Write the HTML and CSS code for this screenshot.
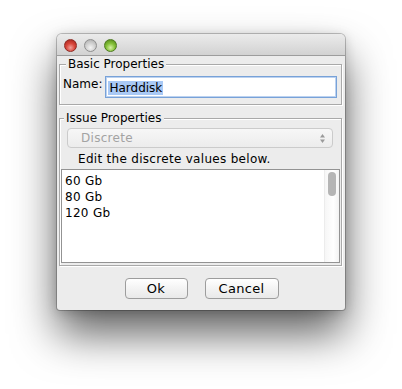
FILE: index.html
```html
<!DOCTYPE html>
<html lang="en">

<head>
  <meta charset="UTF-8">
  <title>Issue Properties</title>
  <link rel="stylesheet" href="styles.css">
</head>

<body>
  <div class="window">
    <div class="titlebar">
      <span class="light red"></span>
      <span class="light gray"></span>
      <span class="light green"></span>
    </div>

    <div class="content">
      <fieldset class="group basic">
        <legend>Basic Properties</legend>
        <div class="name-row">
          <label class="name-label">Name:</label>
          <div class="textfield"><span class="selected">Harddisk</span></div>
        </div>
      </fieldset>

      <fieldset class="group issue">
        <legend>Issue Properties</legend>
        <div class="combo">
          <span class="combo-text">Discrete</span>
          <svg class="combo-arrows" width="7" height="11" viewBox="0 0 7 11">
            <path d="M3.5 1 L6 4.5 L1 4.5 Z" fill="#9a9a9a" />
            <path d="M3.5 10 L6 6.5 L1 6.5 Z" fill="#9a9a9a" />
          </svg>
        </div>
        <div class="hint">Edit the discrete values below.</div>
        <div class="list">
          <ul class="values">
            <li>60 Gb</li>
            <li>80 Gb</li>
            <li>120 Gb</li>
          </ul>
          <div class="scrollbar">
            <div class="thumb"></div>
          </div>
        </div>
      </fieldset>

      <div class="buttons">
        <button class="btn ok">Ok</button>
        <button class="btn cancel">Cancel</button>
      </div>
    </div>
  </div>
</body>

</html>
```

FILE: styles.css
```css
html {
  height: 100%;
}

body {
  margin: 0;
  min-height: 100%;
  padding-top: 34px;
  box-sizing: border-box;
  background: #fff;
  font-family: "DejaVu Sans", "Noto Sans", sans-serif;
  font-size: 12px;
  color: #000;
}

.window {
  margin-left: 57px;
  width: 288px;
  height: 276px;
  background: #ececec;
  border-radius: 5px 5px 3px 3px;
  /* mac style window shadow, heavier below */
  box-shadow: 0 0 0 1px rgba(0, 0, 0, 0.22), 0 24px 44px rgba(0, 0, 0, 0.62), 0 2px 12px rgba(0, 0, 0, 0.18);
  display: flex;
  flex-direction: column;
  overflow: hidden;
}

/* title bar */
.titlebar {
  height: 22px;
  border-bottom: 1px solid #9d9d9d;
  background: linear-gradient(#ebebeb, #d2d2d2);
  display: flex;
  align-items: center;
  gap: 7px;
  padding: 1px 0 0 7px;
  box-sizing: border-box;
}

.light {
  width: 13px;
  height: 13px;
  border-radius: 50%;
  box-sizing: border-box;
}

.light.red {
  background: radial-gradient(circle at 50% 70%, #f0a09a 0, #d9473c 45%, #9e1d16 100%);
  border: 1px solid #8e2a24;
}

.light.gray {
  background: radial-gradient(circle at 50% 70%, #f4f4f4 0, #cfcfcf 50%, #a9a9a9 100%);
  border: 1px solid #8f8f8f;
}

.light.green {
  background: radial-gradient(circle at 50% 70%, #d7f0a6 0, #86c23a 45%, #4c7f14 100%);
  border: 1px solid #4d7a1f;
}

.content {
  padding: 1px 3px 0 2px;
  display: flex;
  flex-direction: column;
}

/* etched group boxes */
.group {
  margin: 0;
  border: 1px solid #a9a9a9;
  box-shadow: inset 1px 1px 0 #fff, 1px 1px 0 #fff;
  min-width: 0;
}

.group legend {
  padding: 0 2px;
  margin-left: 3px;
  background: #ececec;
  line-height: 14px;
}

.basic {
  padding: 0 4px 6px 3px;
}

.name-row {
  display: flex;
  align-items: flex-start;
  gap: 3px;
}

.name-label {
  line-height: 14px;
  margin-top: 6px;
}

.textfield {
  flex: 1;
  height: 22px;
  margin-top: 5px;
  box-sizing: border-box;
  border: 1px solid #78a2d8;
  box-shadow: inset 0 0 0 1px #bcd2f0;
  background: #fff;
  padding: 4px 0 0 2px;
  line-height: 14px;
}

.selected {
  background: #a9c9f5;
  padding: 0 1px;
}

.issue {
  margin-top: 6px;
  padding: 0 1px 2px 1px;
}

.combo {
  margin: 3px 7px 0 6px;
  height: 20px;
  box-sizing: border-box;
  border: 1px solid #cbcbcb;
  border-radius: 4px;
  background: linear-gradient(#f7f7f7, #ececec);
  display: flex;
  align-items: center;
  justify-content: space-between;
  padding: 0 6px 0 13px;
}

.combo-text {
  color: #a3a3a3;
  letter-spacing: 0.3px;
}

.hint {
  margin: 4px 0 0 17px;
  line-height: 15px;
  letter-spacing: 0.3px;
}

.list {
  margin-top: 2px;
  height: 94px;
  box-sizing: border-box;
  border: 1px solid #939393;
  background: #fff;
  display: flex;
}

.values {
  flex: 1;
  list-style: none;
  margin: 0;
  padding: 3px 0 0 3px;
}

.values li {
  line-height: 16px;
  letter-spacing: 0.3px;
}

.scrollbar {
  width: 15px;
  border-left: 1px solid #ececec;
  background: linear-gradient(90deg, #f6f6f6, #fff 60%, #f3f3f3);
  padding: 2px 0 0 3px;
  box-sizing: border-box;
}

.thumb {
  width: 8px;
  height: 24px;
  border-radius: 4px;
  background: #b5b5b5;
}

/* buttons */
.buttons {
  display: flex;
  justify-content: center;
  gap: 17px;
  margin-top: 12px;
  padding-left: 2px;
}

.btn {
  font-family: inherit;
  font-size: 13px;
  height: 21px;
  padding: 0;
  border: 1px solid #9d9d9d;
  border-radius: 4px;
  background: linear-gradient(#ffffff, #f1f1f1 60%, #e9e9e9);
  color: #000;
  line-height: 19px;
  letter-spacing: 0.3px;
}

.btn.ok {
  width: 63px;
}

.btn.cancel {
  width: 74px;
}
```
